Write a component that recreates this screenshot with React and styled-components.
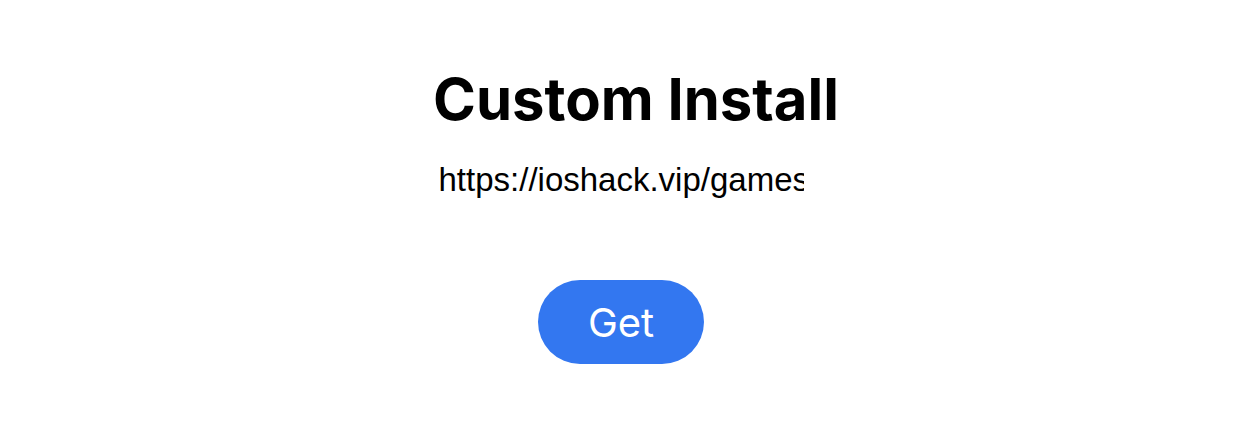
import styled, { createGlobalStyle } from 'styled-components'

const GlobalStyle = createGlobalStyle`
body {
    margin: 0;
    background: #fff;
}
`

const Page = styled.div`
display: flex;
flex-direction: column;
align-items: center;
padding-top: 66px;
height: 434px;
box-sizing: border-box;
`

const Title = styled.h1`
margin: 0;
padding-left: 30px;
font-family: Inter, "Liberation Sans", sans-serif;
font-weight: 700;
font-size: 58px;
line-height: 66px;
color: #000;
`

const UrlInput = styled.input`
margin-top: 28px;
width: 365px;
height: 40px;
padding: 0;
border: none;
outline: none;
background: transparent;
font-family: "Liberation Sans", Arial, sans-serif;
font-size: 33px;
line-height: 40px;
color: #000;
`

const GetButton = styled.button`
margin-top: 80px;
width: 166px;
height: 84px;
border: none;
border-radius: 42px;
background: #3377f0;
color: #fff;
font-family: Inter, "Liberation Sans", sans-serif;
font-size: 40px;
font-weight: 400;
cursor: pointer;
`

const App = () => {
    return (
        <>
            <GlobalStyle />
            <Page>
                <Title>Custom Install</Title>
                <UrlInput type="text" defaultValue="https://ioshack.vip/games" />
                <GetButton>Get</GetButton>
            </Page>
        </>
    )
}

export default App
